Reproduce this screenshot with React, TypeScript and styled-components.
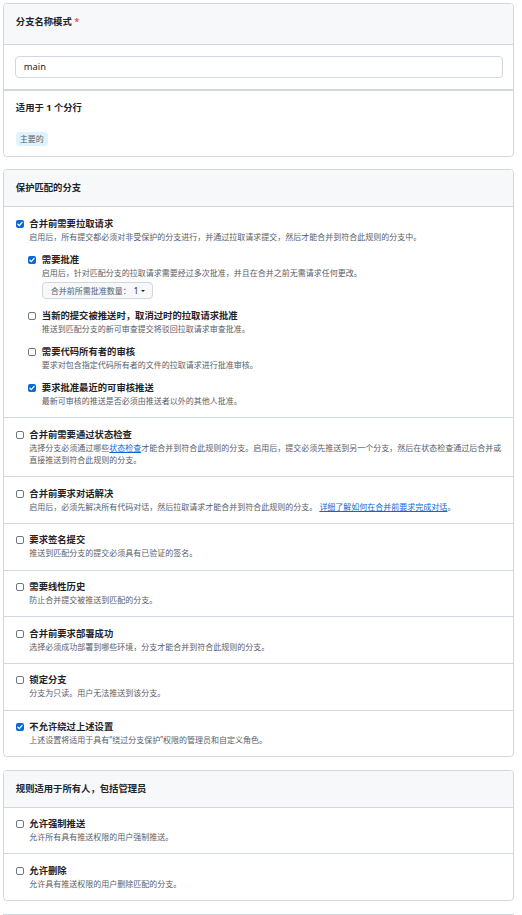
import styled, { createGlobalStyle } from 'styled-components';

interface IRule {
  title: string;
  desc: React.ReactNode;
  checked?: boolean;
  options?: IRule[];
  select?: string;
}

const GlobalStyle = createGlobalStyle`
  body {
    margin: 0;
    background: #ffffff;
  }
`;

const CheckBox = ({ checked }: { checked?: boolean }) => (
  <Box $checked={checked}>
    {checked && (
      <svg width="8" height="8" viewBox="0 0 8 8">
        <path d="M1.9 4.2 L3.3 5.6 L6.1 2.4" fill="none" stroke="#ffffff" strokeWidth="1.3" strokeLinecap="round" strokeLinejoin="round" />
      </svg>
    )}
  </Box>
);

const RuleItem = ({ rule }: { rule: IRule }) => (
  <ItemLayout>
    <CheckBox checked={rule.checked} />
    <ItemBody>
      <ItemTitle>{rule.title}</ItemTitle>
      <ItemDesc>{rule.desc}</ItemDesc>
      {rule.select && (
        <SelectButton type="button">
          {rule.select}
          <SelectValue>1</SelectValue>
          <Caret />
        </SelectButton>
      )}
      {rule.options && (
        <NestedList>
          {rule.options.map((option) => (
            <RuleItem key={option.title} rule={option} />
          ))}
        </NestedList>
      )}
    </ItemBody>
  </ItemLayout>
);

const App = () => {
  return (
    <PageLayout>
      <GlobalStyle />
      <Panel>
        <PanelHeader $tall>
          分支名称模式 <Required>*</Required>
        </PanelHeader>
        <InputSection>
          <PatternInput readOnly value="main" />
        </InputSection>
        <AppliesSection>
          <SectionTitle>适用于 1 个分行</SectionTitle>
          <BranchLabel>主要的</BranchLabel>
        </AppliesSection>
      </Panel>

      <Panel>
        <PanelHeader>保护匹配的分支</PanelHeader>
        {protectRules.map((rule) => (
          <RuleRow key={rule.title}>
            <RuleItem rule={rule} />
          </RuleRow>
        ))}
      </Panel>

      <Panel>
        <PanelHeader>规则适用于所有人，包括管理员</PanelHeader>
        {everyoneRules.map((rule) => (
          <RuleRow key={rule.title}>
            <RuleItem rule={rule} />
          </RuleRow>
        ))}
      </Panel>

      <FooterLine />
    </PageLayout>
  );
};

const PageLayout = styled.div`
  display: flex;
  flex-direction: column;
  gap: 12.5px;
  padding: 3.3px 7.7px 12px 3.3px;
  font-family: 'Noto Sans', 'Noto Sans CJK SC', sans-serif;
  color: #1f2328;
`;
const Panel = styled.section`
  border: 1px solid #d0d7de;
  border-radius: 4px;
  background: #ffffff;
  overflow: hidden;
`;
const PanelHeader = styled.div<{ $tall?: boolean }>`
  padding: 11px 11.5px ${({ $tall }) => ($tall ? '15px' : '11px')};
  background: #f6f8fa;
  border-bottom: 1px solid #d0d7de;
  font-size: 9.33px;
  line-height: 14px;
  font-weight: 700;
`;
const Required = styled.span`
  color: #cf222e;
  font-weight: 400;
`;
const InputSection = styled.div`
  padding: 10.7px 10.5px;
  border-bottom: 1px solid #d0d7de;
`;
const PatternInput = styled.input`
  display: block;
  box-sizing: border-box;
  width: 100%;
  height: 22px;
  padding: 0 8px;
  border: 1px solid #d0d7de;
  border-radius: 4px;
  font-family: inherit;
  font-size: 9.33px;
  color: #1f2328;
  outline: none;
`;
const AppliesSection = styled.div`
  display: flex;
  flex-direction: column;
  align-items: flex-start;
  gap: 17px;
  padding: 10px 11.5px;
  border-top: 1px solid #d0d7de;
`;
const SectionTitle = styled.div`
  font-size: 9.33px;
  line-height: 14px;
  font-weight: 700;
`;
const BranchLabel = styled.span`
  padding: 0 4px;
  height: 14px;
  line-height: 14px;
  border-radius: 4px;
  background: #ddf4ff;
  color: #57606a;
  font-size: 8px;
`;
const RuleRow = styled.div`
  padding: 9.5px 11px 10.2px 11.5px;
  & + & {
    border-top: 1px solid #d0d7de;
  }
`;
const ItemLayout = styled.div`
  display: flex;
  align-items: flex-start;
  gap: 5.5px;
`;
const Box = styled.span<{ $checked?: boolean }>`
  flex: none;
  display: flex;
  align-items: center;
  justify-content: center;
  box-sizing: border-box;
  width: 8px;
  height: 8px;
  margin-top: 3px;
  border-radius: 2px;
  border: ${({ $checked }) => ($checked ? 'none' : '1px solid #6e7781')};
  background: ${({ $checked }) => ($checked ? '#0969da' : '#ffffff')};
`;
const ItemBody = styled.div`
  flex: 1;
  min-width: 0;
`;
const ItemTitle = styled.div`
  font-size: 9.33px;
  line-height: 14px;
  font-weight: 700;
`;
const ItemDesc = styled.div`
  font-size: 8px;
  line-height: 12px;
  color: #57606a;
`;
const Link = styled.a`
  color: #0969da;
  text-decoration: underline;
  text-underline-offset: 1px;
`;
const NestedList = styled.div`
  display: flex;
  flex-direction: column;
  gap: 10px;
  margin-top: 10px;
  margin-left: -1px;
`;
const SelectButton = styled.button`
  display: flex;
  align-items: center;
  height: 17.3px;
  margin-top: 3.3px;
  padding: 0 7px 0 8px;
  border: 1px solid #d0d7de;
  border-radius: 4px;
  background: #f6f8fa;
  font-family: inherit;
  font-size: 8px;
  color: #57606a;
`;
const SelectValue = styled.span`
  margin-left: 3px;
  color: #1f2328;
`;
const Caret = styled.span`
  margin-left: 3px;
  width: 0;
  height: 0;
  border-left: 2.3px solid transparent;
  border-right: 2.3px solid transparent;
  border-top: 2.5px solid #1f2328;
`;
const FooterLine = styled.div`
  border-top: 1px solid #d0d7de;
`;

// 규칙 데이터 (Link 정의 이후에 생성)
const nestedRules: IRule[] = [
  {
    title: '需要批准',
    desc: '启用后，针对匹配分支的拉取请求需要经过多次批准，并且在合并之前无需请求任何更改。',
    checked: true,
    select: '合并前所需批准数量：',
  },
  {
    title: '当新的提交被推送时，取消过时的拉取请求批准',
    desc: '推送到匹配分支的新可审查提交将驳回拉取请求审查批准。',
  },
  {
    title: '需要代码所有者的审核',
    desc: '要求对包含指定代码所有者的文件的拉取请求进行批准审核。',
  },
  {
    title: '要求批准最近的可审核推送',
    desc: '最新可审核的推送是否必须由推送者以外的其他人批准。',
    checked: true,
  },
];

const protectRules: IRule[] = [
  {
    title: '合并前需要拉取请求',
    desc: '启用后，所有提交都必须对非受保护的分支进行，并通过拉取请求提交，然后才能合并到符合此规则的分支中。',
    checked: true,
    options: nestedRules,
  },
  {
    title: '合并前需要通过状态检查',
    desc: (
      <>
        选择分支必须通过哪些<Link href="#">状态检查</Link>才能合并到符合此规则的分支。启用后，提交必须先推送到另一个分支，然后在状态检查通过后合并或直接推送到符合此规则的分支。
      </>
    ),
  },
  {
    title: '合并前要求对话解决',
    desc: (
      <>
        启用后，必须先解决所有代码对话，然后拉取请求才能合并到符合此规则的分支。 <Link href="#">详细了解如何在合并前要求完成对话</Link>。
      </>
    ),
  },
  { title: '要求签名提交', desc: '推送到匹配分支的提交必须具有已验证的签名。' },
  { title: '需要线性历史', desc: '防止合并提交被推送到匹配的分支。' },
  { title: '合并前要求部署成功', desc: '选择必须成功部署到哪些环境，分支才能合并到符合此规则的分支。' },
  { title: '锁定分支', desc: '分支为只读。用户无法推送到该分支。' },
  {
    title: '不允许绕过上述设置',
    desc: '上述设置将适用于具有“绕过分支保护”权限的管理员和自定义角色。',
    checked: true,
  },
];

const everyoneRules: IRule[] = [
  { title: '允许强制推送', desc: '允许所有具有推送权限的用户强制推送。' },
  { title: '允许删除', desc: '允许具有推送权限的用户删除匹配的分支。' },
];

export default App;
